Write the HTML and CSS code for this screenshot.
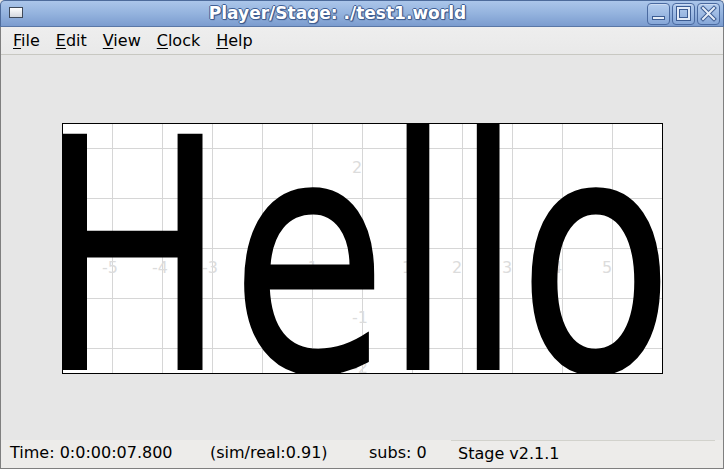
FILE: index.html
```html
<!DOCTYPE html>
<html>
<head>
<meta charset="utf-8">
<title>Player/Stage: ./test1.world</title>
<link rel="stylesheet" href="styles.css">
</head>
<body>
<div class="window">
  <div class="titlebar">
    <div class="winmenu"><span class="winmenu-icon"></span></div>
    <div class="title">Player/Stage: ./test1.world</div>
    <div class="buttons">
      <span class="tbtn">
        <svg width="21" height="20" viewBox="0 0 21 20">
          <rect x="4.5" y="12.5" width="12" height="3" fill="#e4ecf7" stroke="#3c5c92" stroke-width="1"/>
        </svg>
      </span>
      <span class="tbtn">
        <svg width="21" height="20" viewBox="0 0 21 20">
          <rect x="5" y="4" width="11" height="11" fill="none" stroke="#3c5c92" stroke-width="4"/>
          <rect x="5" y="4" width="11" height="11" fill="none" stroke="#e4ecf7" stroke-width="2"/>
        </svg>
      </span>
      <span class="tbtn">
        <svg width="21" height="20" viewBox="0 0 21 20">
          <path d="M5 4 L16 15 M16 4 L5 15" stroke="#3c5c92" stroke-width="4" stroke-linecap="square"/>
          <path d="M5 4 L16 15 M16 4 L5 15" stroke="#e4ecf7" stroke-width="2" stroke-linecap="square"/>
        </svg>
      </span>
    </div>
  </div>
  <div class="body">
    <div class="menubar">
      <span class="menu"><u>F</u>ile</span>
      <span class="menu"><u>E</u>dit</span>
      <span class="menu"><u>V</u>iew</span>
      <span class="menu"><u>C</u>lock</span>
      <span class="menu"><u>H</u>elp</span>
    </div>
    <div class="main">
      <div class="stage">
        <svg class="canvas" width="599" height="249" viewBox="0 0 599 249">
          <g class="grid">
            <line x1="49.5" y1="0" x2="49.5" y2="249"/>
            <line x1="99.5" y1="0" x2="99.5" y2="249"/>
            <line x1="149.5" y1="0" x2="149.5" y2="249"/>
            <line x1="199.5" y1="0" x2="199.5" y2="249"/>
            <line x1="249.5" y1="0" x2="249.5" y2="249"/>
            <line x1="299.5" y1="0" x2="299.5" y2="249"/>
            <line x1="349.5" y1="0" x2="349.5" y2="249"/>
            <line x1="399.5" y1="0" x2="399.5" y2="249"/>
            <line x1="449.5" y1="0" x2="449.5" y2="249"/>
            <line x1="499.5" y1="0" x2="499.5" y2="249"/>
            <line x1="549.5" y1="0" x2="549.5" y2="249"/>
            <line x1="0" y1="24.5" x2="599" y2="24.5"/>
            <line x1="0" y1="74.5" x2="599" y2="74.5"/>
            <line x1="0" y1="124.5" x2="599" y2="124.5"/>
            <line x1="0" y1="174.5" x2="599" y2="174.5"/>
            <line x1="0" y1="224.5" x2="599" y2="224.5"/>
          </g>
          <g class="labels">
            <text x="39" y="149">-5</text>
            <text x="89" y="149">-4</text>
            <text x="139" y="149">-3</text>
            <text x="189" y="149">-2</text>
            <text x="239" y="149">-1</text>
            <text x="289" y="149">0</text>
            <text x="339" y="149">1</text>
            <text x="389" y="149">2</text>
            <text x="439" y="149">3</text>
            <text x="489" y="149">4</text>
            <text x="539" y="149">5</text>
            <text x="289" y="49">2</text>
            <text x="289" y="99">1</text>
            <text x="289" y="199">-1</text>
            <text x="289" y="249">-2</text>
          </g>
          <text class="bitmap" x="-33" y="246" transform="scale(0.78 1)"><tspan>H</tspan><tspan class="thick" dx="5">e</tspan><tspan dx="-5">ll</tspan><tspan class="thick" dx="-6">o</tspan></text>
        </svg>
      </div>
    </div>
    <div class="statusbar">
      <span class="st st-time">Time: 0:0:00:07.800</span>
      <span class="st st-sim">(sim/real:0.91)</span>
      <span class="st st-subs">subs: 0</span>
      <span class="st st-ver">Stage v2.1.1</span>
    </div>
  </div>
</div>
</body>
</html>
```
FILE: styles.css
```css
html, body {
  margin: 0;
  padding: 0;
  background: #e6e6e6;
}

body {
  font-family: "DejaVu Sans", "Noto Sans", sans-serif;
  color: #000;
}

.window {
  width: 724px;
  height: 469px;
  display: flex;
  flex-direction: column;
  overflow: hidden;
}

/* ---------- title bar ---------- */
.titlebar {
  height: 27px;
  box-sizing: border-box;
  display: flex;
  align-items: center;
  border: 1px solid #4d6b9b;
  border-bottom-color: #5a77a6;
  border-radius: 5px 5px 0 0;
  background: linear-gradient(#abc6ea 0%, #94b3de 50%, #7b9ccf 100%);
}

.winmenu {
  width: 29px;
  height: 25px;
  display: flex;
  align-items: center;
  padding-left: 8px;
  box-sizing: border-box;
}

.winmenu-icon {
  width: 14px;
  height: 11px;
  box-sizing: border-box;
  border: 1px solid #3f4a5a;
  background: linear-gradient(#ffffff, #d4d8de);
  margin-top: -2px;
}

.title {
  flex: 1;
  text-align: center;
  font-weight: bold;
  font-size: 17px;
  line-height: 25px;
  color: #ffffff;
  white-space: nowrap;
  text-shadow: 1px 0 0 #3f5f95, -1px 0 0 #3f5f95, 0 1px 0 #3f5f95, 0 -1px 0 #3f5f95, 1px 1px 1px #2f4b7a;
  padding-right: 2px;
}

.buttons {
  display: flex;
  gap: 2px;
  padding-right: 3px;
  align-items: center;
}

.tbtn {
  width: 23px;
  height: 22px;
  box-sizing: border-box;
  border: 1px solid #4a6aa0;
  border-radius: 4px;
  background: linear-gradient(#b4cdee, #86a7d8);
  box-shadow: inset 0 1px 0 #cddcf2;
  display: flex;
  align-items: center;
  justify-content: center;
}

.tbtn svg {
  display: block;
}

/* ---------- body ---------- */
.body {
  flex: 1;
  display: flex;
  flex-direction: column;
  border: 1px solid #7f7f7f;
  border-top: none;
  min-height: 0;
}

.menubar {
  height: 28px;
  box-sizing: border-box;
  border-bottom: 1px solid #c8c8c2;
  background: linear-gradient(#eeeeee, #e9e9e9);
  display: flex;
  align-items: flex-start;
  padding-left: 4px;
  font-size: 16px;
  line-height: 27px;
}

.menu {
  padding: 0 8px;
  white-space: nowrap;
}

.menu u {
  text-decoration: underline;
  text-underline-offset: 2px;
  text-decoration-thickness: 1px;
}

.main {
  flex: 1;
  background: #e6e6e6;
  padding: 68px 0 0 61px;
  min-height: 0;
}

.stage {
  width: 599px;
  height: 249px;
  border: 1px solid #000;
  background: #ffffff;
  overflow: hidden;
}

.canvas {
  display: block;
}

.grid line {
  stroke: #d6d6d6;
  stroke-width: 1;
}

.labels text {
  font-family: "DejaVu Sans", sans-serif;
  font-size: 16px;
  fill: #dcdcdc;
}

.bitmap {
  font-family: "DejaVu Sans", sans-serif;
  font-size: 324px;
  fill: #000;
}

.bitmap .thick {
  stroke: #000;
  stroke-width: 2.5px;
}

/* ---------- status bar ---------- */
.statusbar {
  height: 28px;
  box-sizing: border-box;
  background: #edecea;
  display: flex;
  font-size: 16px;
  line-height: 26px;
  white-space: nowrap;
}

.st {
  display: block;
  box-sizing: border-box;
}

.st-time {
  width: 209px;
  padding-left: 9px;
}

.st-sim {
  width: 159px;
}

.st-subs {
  width: 82px;
}

.st-ver {
  width: 264px;
  padding-left: 7px;
  border-top: 1px solid #d2d2cc;
  line-height: 25px;
}
```
